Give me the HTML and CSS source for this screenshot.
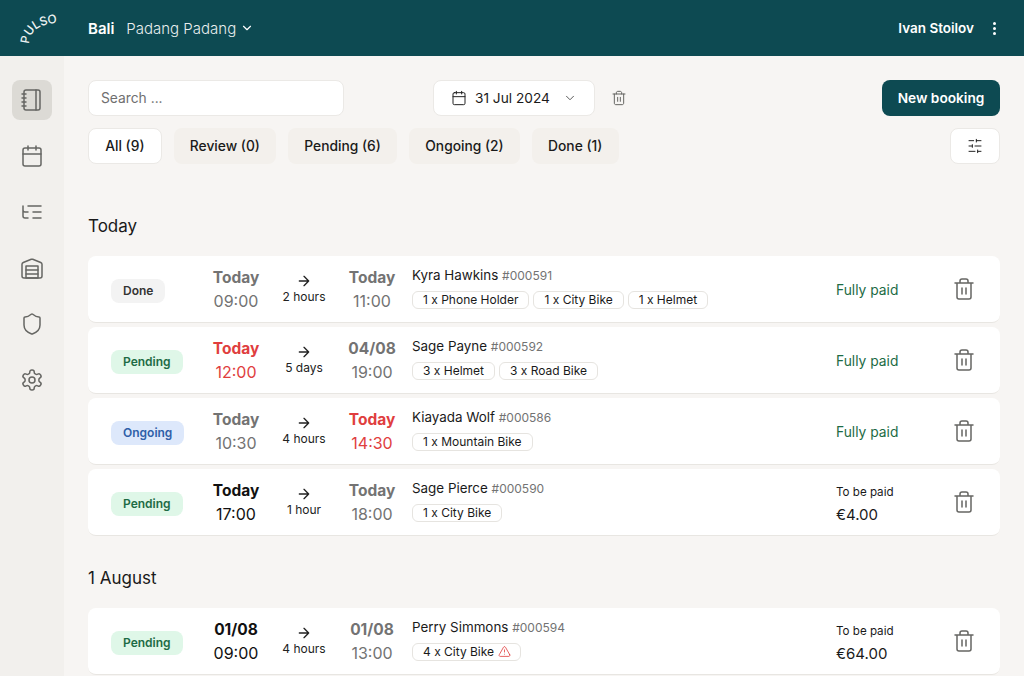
FILE: index.html
```html
<!doctype html>
<html lang="en">
  <head>
    <meta charset="UTF-8" />
    <meta name="viewport" content="width=device-width, initial-scale=1.0" />
    <title>Pulso bookings</title>
    <link rel="stylesheet" href="styles.css">
  </head>
  <body>
    <svg class="sprite" xmlns="http://www.w3.org/2000/svg">
      <symbol id="i-notebook" viewBox="0 0 24 24"><path d="M2 6h4M2 10h4M2 14h4M2 18h4M16 2v20"/><rect x="4" y="2" width="16" height="20" rx="2"/></symbol>
      <symbol id="i-calendar" viewBox="0 0 24 24"><path d="M8 2v4M16 2v4M3 10h18"/><rect x="3" y="4" width="18" height="18" rx="2"/></symbol>
      <symbol id="i-tree" viewBox="0 0 24 24"><path d="M21 12h-8M21 6H8M21 18h-8M3 6v4c0 1.1.9 2 2 2h3M3 10v6c0 1.1.9 2 2 2h3"/></symbol>
      <symbol id="i-warehouse" viewBox="0 0 24 24"><path d="M22 8.35V20a2 2 0 0 1-2 2H4a2 2 0 0 1-2-2V8.35A2 2 0 0 1 3.26 6.5l8-3.2a2 2 0 0 1 1.48 0l8 3.2A2 2 0 0 1 22 8.35ZM6 18h12M6 14h12"/><rect x="6" y="10" width="12" height="12"/></symbol>
      <symbol id="i-shield" viewBox="0 0 24 24"><path d="M20 13c0 5-3.5 7.5-7.66 8.95a1 1 0 0 1-.67-.01C7.5 20.5 4 18 4 13V6a1 1 0 0 1 1-1c2 0 4.5-1.2 6.24-2.72a1.17 1.17 0 0 1 1.52 0C14.51 3.81 17 5 19 5a1 1 0 0 1 1 1z"/></symbol>
      <symbol id="i-settings" viewBox="0 0 24 24"><path d="M12.22 2h-.44a2 2 0 0 0-2 2v.18a2 2 0 0 1-1 1.73l-.43.25a2 2 0 0 1-2 0l-.15-.08a2 2 0 0 0-2.73.73l-.22.38a2 2 0 0 0 .73 2.73l.15.1a2 2 0 0 1 1 1.72v.51a2 2 0 0 1-1 1.74l-.15.09a2 2 0 0 0-.73 2.73l.22.38a2 2 0 0 0 2.73.73l.15-.08a2 2 0 0 1 2 0l.43.25a2 2 0 0 1 1 1.73V20a2 2 0 0 0 2 2h.44a2 2 0 0 0 2-2v-.18a2 2 0 0 1 1-1.73l.43-.25a2 2 0 0 1 2 0l.15.08a2 2 0 0 0 2.73-.73l.22-.39a2 2 0 0 0-.73-2.73l-.15-.08a2 2 0 0 1-1-1.74v-.5a2 2 0 0 1 1-1.74l.15-.09a2 2 0 0 0 .73-2.73l-.22-.38a2 2 0 0 0-2.73-.73l-.15.08a2 2 0 0 1-2 0l-.43-.25a2 2 0 0 1-1-1.73V4a2 2 0 0 0-2-2z"/><circle cx="12" cy="12" r="3"/></symbol>
      <symbol id="i-trash" viewBox="0 0 24 24"><path d="M3 6h18M19 6v14c0 1-1 2-2 2H7c-1 0-2-1-2-2V6M8 6V4c0-1 1-2 2-2h4c1 0 2 1 2 2v2M10 11v6M14 11v6"/></symbol>
      <symbol id="i-chevron" viewBox="0 0 24 24"><path d="m6 9 6 6 6-6"/></symbol>
      <symbol id="i-arrow" viewBox="0 0 24 24"><path d="M5 12h14M12 5l7 7-7 7"/></symbol>
      <symbol id="i-sliders" viewBox="0 0 24 24"><path d="M21 4h-7M10 4H3M21 12h-9M8 12H3M21 20h-5M12 20H3M14 2v4M8 10v4M16 18v4"/></symbol>
      <symbol id="i-alert" viewBox="0 0 24 24"><path d="m21.73 18-8-14a2 2 0 0 0-3.48 0l-8 14A2 2 0 0 0 4 21h16a2 2 0 0 0 1.73-3ZM12 9v4M12 17h.01"/></symbol>
    </svg>

    <header class="topbar">
      <svg class="logo" viewBox="0 0 64 56">
        <path id="logoCurve" d="M29 44 C 29 33, 37 24, 58 23" fill="none" stroke="none"/>
        <text><textPath href="#logoCurve">PULSO</textPath></text>
      </svg>
      <div class="place">
        <span class="place-city">Bali</span>
        <span class="place-spot">Padang Padang</span>
        <svg class="icon icon-chevron-top"><use href="#i-chevron"/></svg>
      </div>
      <div class="user">
        <span class="user-name">Ivan Stoilov</span>
        <span class="dots"><i></i><i></i><i></i></span>
      </div>
    </header>

    <div class="layout">
      <nav class="sidebar">
        <a class="nav-item active"><svg class="icon"><use href="#i-notebook"/></svg></a>
        <a class="nav-item"><svg class="icon"><use href="#i-calendar"/></svg></a>
        <a class="nav-item"><svg class="icon"><use href="#i-tree"/></svg></a>
        <a class="nav-item"><svg class="icon"><use href="#i-warehouse"/></svg></a>
        <a class="nav-item"><svg class="icon"><use href="#i-shield"/></svg></a>
        <a class="nav-item"><svg class="icon"><use href="#i-settings"/></svg></a>
      </nav>

      <main class="content">
        <div class="toolbar">
          <div class="search">Search ...</div>
          <div class="date-group">
            <div class="date-picker">
              <svg class="icon icon-date"><use href="#i-calendar"/></svg>
              <span>31 Jul 2024</span>
              <svg class="icon icon-date-chevron"><use href="#i-chevron"/></svg>
            </div>
            <svg class="icon icon-date-trash"><use href="#i-trash"/></svg>
          </div>
          <button class="btn-primary">New booking</button>
        </div>

        <div class="filters">
          <button class="tab tab-active">All (9)</button>
          <button class="tab">Review (0)</button>
          <button class="tab">Pending (6)</button>
          <button class="tab">Ongoing (2)</button>
          <button class="tab">Done (1)</button>
          <button class="btn-filter"><svg class="icon icon-sliders"><use href="#i-sliders"/></svg></button>
        </div>

        <h2 class="day-title day-first">Today</h2>
        <div class="rows">
          <div class="row">
            <div class="status"><span class="badge badge-done">Done</span></div>
            <div class="time muted"><b>Today</b><span>09:00</span></div>
            <div class="span"><svg class="icon icon-arrow"><use href="#i-arrow"/></svg><span>2 hours</span></div>
            <div class="time muted"><b>Today</b><span>11:00</span></div>
            <div class="details">
              <div class="customer">Kyra Hawkins <span class="ref">#000591</span></div>
              <div class="tags"><span class="tag">1 x Phone Holder</span><span class="tag">1 x City Bike</span><span class="tag">1 x Helmet</span></div>
            </div>
            <div class="paid">Fully paid</div>
            <svg class="icon icon-trash"><use href="#i-trash"/></svg>
          </div>

          <div class="row">
            <div class="status"><span class="badge badge-pending">Pending</span></div>
            <div class="time late"><b>Today</b><span>12:00</span></div>
            <div class="span"><svg class="icon icon-arrow"><use href="#i-arrow"/></svg><span>5 days</span></div>
            <div class="time muted"><b>04/08</b><span>19:00</span></div>
            <div class="details">
              <div class="customer">Sage Payne <span class="ref">#000592</span></div>
              <div class="tags"><span class="tag">3 x Helmet</span><span class="tag">3 x Road Bike</span></div>
            </div>
            <div class="paid">Fully paid</div>
            <svg class="icon icon-trash"><use href="#i-trash"/></svg>
          </div>

          <div class="row">
            <div class="status"><span class="badge badge-ongoing">Ongoing</span></div>
            <div class="time muted"><b>Today</b><span>10:30</span></div>
            <div class="span"><svg class="icon icon-arrow"><use href="#i-arrow"/></svg><span>4 hours</span></div>
            <div class="time late"><b>Today</b><span>14:30</span></div>
            <div class="details">
              <div class="customer">Kiayada Wolf <span class="ref">#000586</span></div>
              <div class="tags"><span class="tag">1 x Mountain Bike</span></div>
            </div>
            <div class="paid">Fully paid</div>
            <svg class="icon icon-trash"><use href="#i-trash"/></svg>
          </div>

          <div class="row">
            <div class="status"><span class="badge badge-pending">Pending</span></div>
            <div class="time"><b>Today</b><span>17:00</span></div>
            <div class="span"><svg class="icon icon-arrow"><use href="#i-arrow"/></svg><span>1 hour</span></div>
            <div class="time muted"><b>Today</b><span>18:00</span></div>
            <div class="details">
              <div class="customer">Sage Pierce <span class="ref">#000590</span></div>
              <div class="tags"><span class="tag">1 x City Bike</span></div>
            </div>
            <div class="due"><small>To be paid</small><span>€4.00</span></div>
            <svg class="icon icon-trash"><use href="#i-trash"/></svg>
          </div>
        </div>

        <h2 class="day-title">1 August</h2>
        <div class="rows">
          <div class="row">
            <div class="status"><span class="badge badge-pending">Pending</span></div>
            <div class="time"><b>01/08</b><span>09:00</span></div>
            <div class="span"><svg class="icon icon-arrow"><use href="#i-arrow"/></svg><span>4 hours</span></div>
            <div class="time muted"><b>01/08</b><span>13:00</span></div>
            <div class="details">
              <div class="customer">Perry Simmons <span class="ref">#000594</span></div>
              <div class="tags"><span class="tag">4 x City Bike <svg class="icon icon-alert"><use href="#i-alert"/></svg></span></div>
            </div>
            <div class="due"><small>To be paid</small><span>€64.00</span></div>
            <svg class="icon icon-trash"><use href="#i-trash"/></svg>
          </div>
        </div>
      </main>
    </div>
  </body>
</html>
```

FILE: styles.css
```css
html,
body {
  height: 100%;
}
body {
  font-family: Inter, "Liberation Sans", sans-serif;
  margin: 0;
  background-color: #f7f5f3;
  color: #1a1a1a;
  overflow: hidden;
  display: flex;
  flex-direction: column;
}
.sprite {
  display: none;
}
.icon {
  display: block;
  width: 24px;
  height: 24px;
  fill: none;
  stroke: #666663;
  stroke-width: 1.5;
  stroke-linecap: round;
  stroke-linejoin: round;
  flex: none;
}

/* top bar */
.topbar {
  height: 56px;
  flex: none;
  background-color: #0d4a52;
  color: white;
  display: flex;
  align-items: center;
  padding-right: 27px;
}
.logo {
  width: 64px;
  height: 56px;
  margin-right: 24px;
  flex: none;
}
.logo text {
  font-size: 12px;
  font-weight: 500;
  letter-spacing: -0.3px;
  fill: #eef3f3;
}
.place {
  display: flex;
  align-items: center;
}
.place-city {
  font-size: 15px;
  font-weight: 600;
  margin-right: 12px;
}
.place-spot {
  font-size: 15px;
  font-weight: 300;
  color: #e8eeee;
}
.icon-chevron-top {
  width: 14px;
  height: 14px;
  margin-left: 4px;
  stroke: white;
  stroke-width: 2;
}
.user {
  margin-left: auto;
  display: flex;
  align-items: center;
}
.user-name {
  font-size: 13.5px;
  font-weight: 600;
}
.dots {
  display: flex;
  flex-direction: column;
  gap: 2px;
  margin-left: 18px;
  padding: 0 1px;
}
.dots i {
  width: 3px;
  height: 3px;
  border-radius: 50%;
  background-color: white;
}

/* side nav */
.layout {
  flex: 1;
  display: flex;
  min-height: 0;
}
.sidebar {
  width: 64px;
  flex: none;
  background-color: #f2f0ed;
  padding: 24px 12px 0;
  box-sizing: border-box;
  display: flex;
  flex-direction: column;
  gap: 16px;
}
.nav-item {
  width: 40px;
  height: 40px;
  border-radius: 8px;
  display: flex;
  align-items: center;
  justify-content: center;
}
.nav-item.active {
  background-color: #dcdad5;
}

/* toolbar */
.content {
  flex: 1;
  padding: 24px 24px 0;
  min-width: 0;
}
.toolbar {
  display: flex;
  align-items: center;
  height: 36px;
}
.search {
  width: 256px;
  height: 36px;
  box-sizing: border-box;
  background-color: white;
  border: 1px solid #ebe9e6;
  border-radius: 8px;
  padding-left: 12px;
  font-size: 13.8px;
  line-height: 34px;
  color: #6f6f6f;
}
.date-group {
  display: flex;
  align-items: center;
  margin-left: 89px;
}
.date-picker {
  width: 162px;
  height: 36px;
  box-sizing: border-box;
  background-color: white;
  border: 1px solid #ebe9e6;
  border-radius: 8px;
  display: flex;
  align-items: center;
  padding-left: 17px;
  font-size: 13.7px;
}
.icon-date {
  width: 16px;
  height: 16px;
  margin-right: 8px;
  stroke: #222;
}
.icon-date-chevron {
  width: 14px;
  height: 14px;
  margin-left: 13px;
  stroke: #444;
}
.icon-date-trash {
  width: 16px;
  height: 16px;
  margin-left: 16px;
}
.btn-primary {
  margin-left: auto;
  width: 118px;
  height: 36px;
  border: none;
  border-radius: 8px;
  background-color: #0d4a52;
  color: white;
  font-family: inherit;
  font-size: 13.7px;
  font-weight: 600;
}

/* filter tabs */
.filters {
  display: flex;
  align-items: center;
  gap: 12px;
  margin-top: 12px;
}
.tab {
  height: 36px;
  padding: 0 16.2px;
  border: none;
  border-radius: 8px;
  background-color: #f3f0ec;
  color: #1a1a1a;
  font-family: inherit;
  font-size: 13.8px;
  font-weight: 500;
}
.tab-active {
  background-color: white;
  border: 1px solid #ebe9e6;
}
.btn-filter {
  margin-left: auto;
  width: 50px;
  height: 36px;
  background-color: white;
  border: 1px solid #ebe9e6;
  border-radius: 8px;
  display: flex;
  align-items: center;
  justify-content: center;
  padding: 0;
}
.icon-sliders {
  width: 16px;
  height: 16px;
  stroke: #222;
}

/* booking rows */
.day-title {
  margin: 0;
  height: 28px;
  font-size: 17px;
  font-weight: 400;
  line-height: 28px;
}
.day-first {
  padding-top: 48px;
}
.rows {
  margin-top: 16px;
  margin-bottom: 28px;
  display: flex;
  flex-direction: column;
  gap: 4px;
}
.row {
  height: 67px;
  box-sizing: border-box;
  background-color: white;
  border-bottom: 1px solid #e8e6e2;
  border-radius: 8px;
  padding: 0 24px 0 22px;
  display: grid;
  grid-template-columns: 96px 60px 76px 60px 434px 116px 24px;
  align-items: center;
}
.status {
  padding: 4px 0 0 1px;
}
.badge {
  display: inline-block;
  padding: 0 12px;
  height: 24px;
  line-height: 24px;
  border-radius: 8px;
  font-size: 12px;
  font-weight: 600;
}
.badge-done {
  background-color: #f3f3f3;
  color: #333;
}
.badge-pending {
  background-color: #dff7e8;
  color: #1d6b45;
}
.badge-ongoing {
  background-color: #dde8fb;
  color: #2f5fa8;
}
.time {
  display: flex;
  flex-direction: column;
  align-items: center;
  gap: 3px;
  padding-top: 1px;
  white-space: nowrap;
  color: #111;
}
.time b {
  font-size: 15.5px;
  font-weight: 700;
  line-height: 20px;
}
.time span {
  font-size: 16px;
  font-weight: 400;
  line-height: 20px;
}
.muted {
  color: #737373;
}
.late {
  color: #e03e3e;
}
.span {
  display: flex;
  flex-direction: column;
  align-items: center;
  font-size: 12px;
  line-height: 16px;
  color: #222;
}
.icon-arrow {
  width: 16px;
  height: 16px;
  stroke: #222;
  stroke-width: 2;
}
.details {
  padding-left: 10px;
  padding-bottom: 5px;
}
.customer {
  font-size: 13.4px;
  line-height: 20px;
  color: #1a1a1a;
}
.ref {
  font-size: 12px;
  color: #737373;
}
.tags {
  display: flex;
  gap: 4px;
  margin-top: 5px;
}
.tag {
  display: flex;
  align-items: center;
  gap: 4px;
  height: 18px;
  box-sizing: border-box;
  padding: 0 10px;
  border: 1px solid #e6e4e0;
  border-radius: 6px;
  font-size: 12px;
  color: #1a1a1a;
  white-space: nowrap;
}
.icon-alert {
  width: 13px;
  height: 13px;
  margin-right: -1px;
  stroke: #e03e3e;
}
.paid {
  font-size: 13.8px;
  padding-top: 1px;
  color: #1d6b45;
}
.due {
  display: flex;
  flex-direction: column;
  gap: 5px;
  padding-top: 4px;
}
.due small {
  font-size: 11.6px;
  line-height: 16px;
  color: #1a1a1a;
}
.due span {
  font-size: 15px;
  line-height: 20px;
  color: #1a1a1a;
}
.icon-trash {
  width: 24px;
  height: 24px;
}
```
